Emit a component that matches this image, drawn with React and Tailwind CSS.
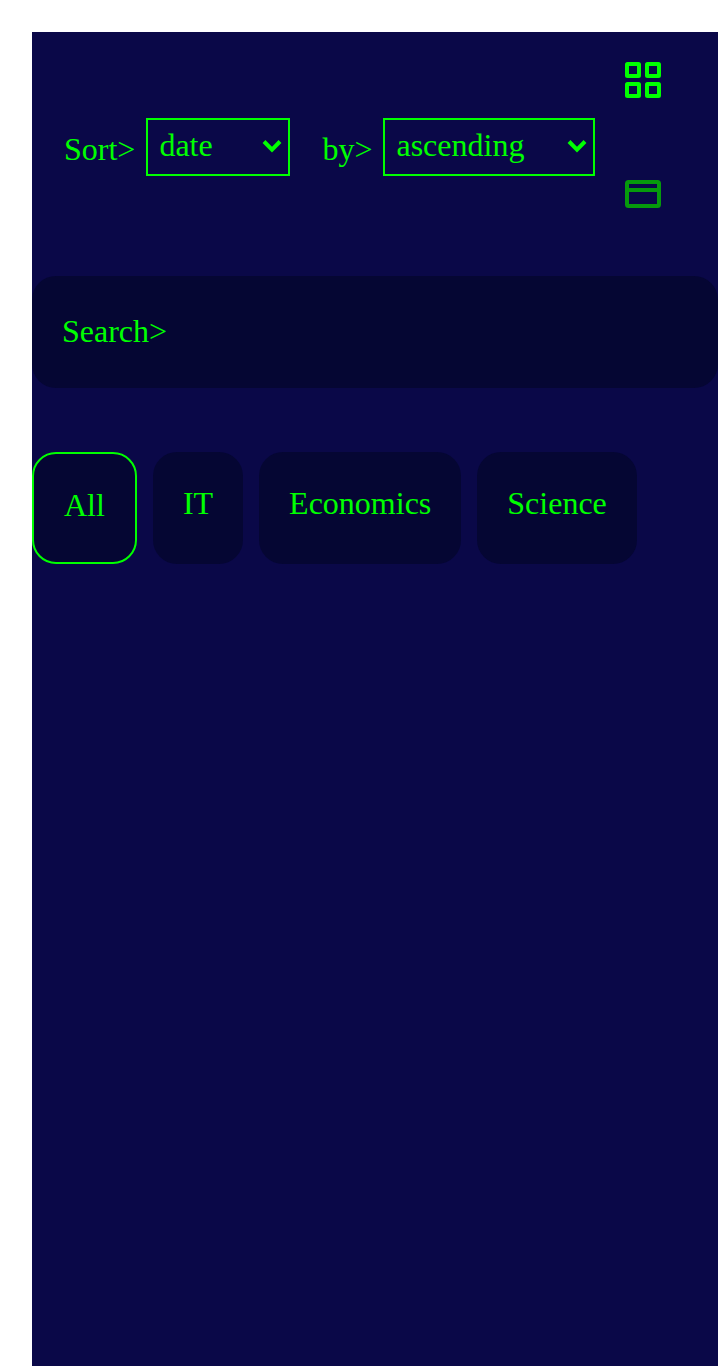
import { useState } from "react";

const categories = ["All", "IT", "Economics", "Science"];

function SelectField({ id, label, options, width }) {
  return (
    <div className="flex items-center gap-[11px]">
      <label htmlFor={id} className="pt-1">
        {label}
      </label>
      <div className={`relative ${width}`}>
        <select
          id={id}
          className="block h-[58px] w-full appearance-none rounded-none border-2 border-[#00ff00] bg-transparent pb-1 pl-[11px] pr-10 outline-none"
        >
          {options.map((option) => (
            <option key={option} className="bg-[#0a0848]">
              {option}
            </option>
          ))}
        </select>
        <svg
          viewBox="0 0 20 13"
          className="pointer-events-none absolute top-[22px] right-2 h-[13px] w-5"
          fill="none"
          stroke="currentColor"
          strokeWidth="4"
          aria-hidden="true"
        >
          <path d="M2 1.5 10 9.7 18 1.5" />
        </svg>
      </div>
    </div>
  );
}

function GridIcon() {
  return (
    <svg viewBox="0 0 36 36" className="size-9" fill="none" stroke="currentColor" strokeWidth="4" aria-hidden="true">
      <rect x="2" y="2" width="12" height="12" rx="0.5" />
      <rect x="22" y="2" width="12" height="12" rx="0.5" />
      <rect x="2" y="22" width="12" height="12" rx="0.5" />
      <rect x="22" y="22" width="12" height="12" rx="0.5" />
    </svg>
  );
}

function CardIcon() {
  return (
    <svg viewBox="0 0 36 28" className="h-7 w-9" fill="none" stroke="currentColor" strokeWidth="4" aria-hidden="true">
      <rect x="2" y="2" width="32" height="24" rx="1.5" />
      <path d="M2 10h32" />
    </svg>
  );
}

export default function App() {
  const [view, setView] = useState("grid");
  const [active, setActive] = useState("All");

  return (
    <div className="flex min-h-screen flex-col bg-white pt-8 pl-8 font-['Liberation_Serif',serif] text-[32px] leading-9 text-[#00ff00]">
      <main className="flex-1 bg-[#0a0848]">
        <header className="flex items-start pt-[30px] pb-[68px] pl-8">
          <div className="flex items-center gap-8 pt-14">
            <SelectField id="sort" label="Sort>" options={["date", "title"]} width="w-36" />
            <SelectField id="order" label="by>" options={["ascending", "descending"]} width="w-[212px]" />
          </div>
          <div className="flex flex-col gap-[82px] pl-[30px]">
            <button
              type="button"
              aria-label="Grid view"
              onClick={() => setView("grid")}
              className={view === "grid" ? "text-[#00ff00]" : "text-[#069a0c]"}
            >
              <GridIcon />
            </button>
            <button
              type="button"
              aria-label="Card view"
              onClick={() => setView("card")}
              className={view === "card" ? "text-[#00ff00]" : "text-[#069a0c]"}
            >
              <CardIcon />
            </button>
          </div>
        </header>

        <div className="flex h-28 items-center gap-3 rounded-3xl bg-[#050633] px-[30px] pb-0.5">
          <label htmlFor="search">Search&gt;</label>
          <input id="search" type="text" className="min-w-0 flex-1 bg-transparent outline-none" />
        </div>

        <nav aria-label="Categories" className="flex flex-wrap gap-4 pt-16">
          {categories.map((name) => (
            <button
              key={name}
              type="button"
              aria-pressed={active === name}
              onClick={() => setActive(name)}
              className={`flex h-28 items-start rounded-3xl bg-[#050633] px-[30px] pt-[27px] leading-12 ${
                active === name ? "border-2 border-[#00ff00]" : ""
              }`}
            >
              {name}
            </button>
          ))}
        </nav>
      </main>
    </div>
  );
}
